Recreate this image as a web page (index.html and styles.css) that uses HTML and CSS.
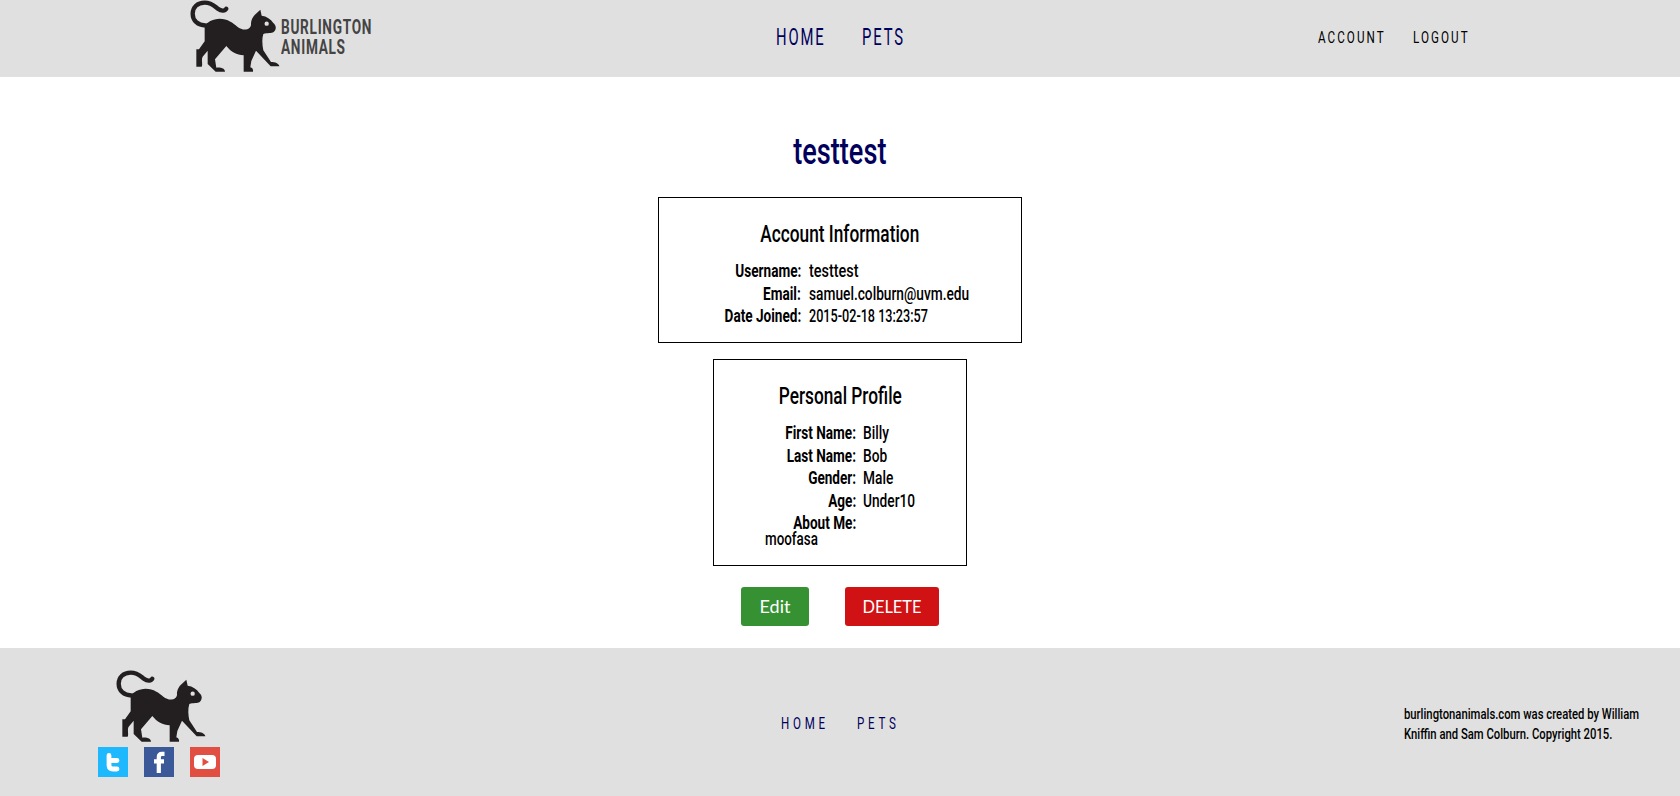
FILE: index.html
```html
<!DOCTYPE html>
<html lang="en">
<head>
<meta charset="utf-8">
<title>Burlington Animals</title>
<link rel="stylesheet" href="styles.css">
</head>
<body>
<svg width="0" height="0" class="defs" aria-hidden="true">
  <symbol id="cat" viewBox="28 0 270 216">
    <path d="M137 26C134 33 122 34 113 27C101 18 93 8 72 8C50 8 36 22 36 41C36 62 52 76 74 76" fill="none" stroke="#231f20" stroke-width="13" stroke-linecap="round"/>
    <path d="M60 80C75 76 86 57 116 56C142 56 157 69 170 80C186 93 209 91 211 74C210 62 216 51 222 45L239 29L243 47C258 49 270 57 278 69C287 76 288 88 279 96C272 101 260 98 248 102C243 118 245 136 248 151L271 186C283 186 295 190 296 199H270L226 152L212 183L209 202C216 204 218 209 217 215H189V166C168 164 151 156 137 138L103 178L107 203C124 202 133 207 133 215H105L81 192V152L66 170C61 178 67 193 63 200H47V148H55L72 124V82Z" fill="#231f20"/>
    <circle cx="258" cy="71" r="6.500" fill="#e0e0e0"/>
  </symbol>
</svg>
<header class="top">
  <a class="brand"><svg class="cat"><use href="#cat"/></svg><span class="brand-name"><b>BURLINGTON</b><b>ANIMALS</b></span></a>
  <nav class="main-nav"><a>HOME</a><a>PETS</a></nav>
  <nav class="user-nav"><a>ACCOUNT</a><a>LOGOUT</a></nav>
</header>
<main>
  <h1><span>testtest</span></h1>
  <section class="card account">
    <h2><span>Account Information</span></h2>
    <dl>
      <dt>Username:</dt><dd class="user">testtest</dd>
      <dt>Email:</dt><dd>samuel.colburn@uvm.edu</dd>
      <dt>Date Joined:</dt><dd class="date">2015-02-18 13:23:57</dd>
    </dl>
  </section>
  <section class="card profile">
    <h2><span>Personal Profile</span></h2>
    <dl>
      <dt>First Name:</dt><dd>Billy</dd>
      <dt>Last Name:</dt><dd>Bob</dd>
      <dt>Gender:</dt><dd>Male</dd>
      <dt>Age:</dt><dd>Under10</dd>
      <dt>About Me:</dt><dd></dd>
    </dl>
    <p class="about">moofasa</p>
  </section>
  <div class="actions"><a class="btn edit">Edit</a><a class="btn delete"><span>DELETE</span></a></div>
</main>
<footer>
  <div class="foot-brand">
    <svg class="cat"><use href="#cat"/></svg>
    <div class="social">
      <svg viewBox="0 0 30 30"><path fill="#1eb8ff" d="M0 0h30v30H0z"/><path d="M11 8.500v9.500q0 4 4 4H19M11 13.500h8" fill="none" stroke="#fff" stroke-width="4.800" stroke-linecap="round"/></svg>
      <svg viewBox="0 0 30 30"><path fill="#3b5998" d="M0 0h30v30H0z"/><path d="M20.500 6.800H18q-3.200 0-3.200 3.400V26M10 14.400h10" fill="none" stroke="#fff" stroke-width="4.200"/></svg>
      <svg viewBox="0 0 30 30"><path fill="#e14e42" d="M0 0h30v30H0z"/><rect x="4" y="8" width="22" height="14" rx="4" fill="#fff"/><path d="M12.500 11v8l6.500-4z" fill="#e14e42"/></svg>
    </div>
  </div>
  <nav class="foot-nav"><a>HOME</a><a>PETS</a></nav>
  <p class="copy"><span>burlingtonanimals.com was created by William</span><span>Kniffin and Sam Colburn. Copyright 2015.</span></p>
</footer>
</body>
</html>
```
FILE: styles.css
```css
* { box-sizing: border-box; margin: 0; padding: 0; }
body { height: 796px; display: flex; flex-direction: column; background: #fff; color: #000; font-family: Roboto, sans-serif; overflow: hidden; }
.defs { display: none; }
a, span, b, dt, dd, .about { white-space: nowrap; }
.cat { display: block; width: 90px; height: 72px; }
.top { height: 77px; background: #e0e0e0; display: grid; grid-template-columns: 776px 542px 1fr; }
.brand { display: flex; padding-left: 189.500px; }
.brand-name { width: 90px; padding: 18px 0 0 1.500px; color: #444; }
.brand-name b { display: block; font-size: 19.500px; line-height: 20px; letter-spacing: 1px; transform: scaleX(.7); transform-origin: left; }
nav { display: flex; font-weight: 400; }
nav a { transform-origin: left; }
.main-nav { padding-top: 23px; color: #00005c; font-size: 23.500px; line-height: 28px; letter-spacing: 3px; }
.main-nav a { width: 86px; transform: scaleX(.63); }
.user-nav { padding-top: 27px; font-size: 17px; line-height: 20px; letter-spacing: 3px; }
.user-nav a { width: 95px; transform: scaleX(.685); }
main { height: 571px; display: flex; flex-direction: column; align-items: center; }
h1 { height: 120px; padding-top: 54px; font-size: 36px; line-height: 42px; font-weight: 500; color: #00005c; }
h1 span { display: block; transform: scaleX(.755); }
.card { border: 1px solid #000; padding-top: 22px; }
.account { width: 364px; height: 146px; }
.profile { width: 254px; height: 207px; margin-top: 16px; }
h2 { display: flex; justify-content: center; height: 40px; font-size: 24.500px; line-height: 28px; font-weight: 500; }
h2 span { display: block; transform: scaleX(.705); }
dl { display: grid; grid-template-columns: 142px 1fr; column-gap: 8px; grid-auto-rows: 22.600px; font-size: 19px; line-height: 22px; }
.profile dl { grid-template-columns: 142px 1fr; column-gap: 7px; }
dt { justify-self: end; font-weight: 700; transform: scaleX(.715); transform-origin: right; }
dd, .about { font-weight: 500; transform: scaleX(.722); transform-origin: left; }
dd { justify-self: start; }
.user { transform: scaleX(.76); }
.date { transform: scaleX(.665); }
.about { font-size: 19px; line-height: 22px; margin: -7px 0 0 51px; transform: scaleX(.705); }
.actions { display: flex; gap: 36px; margin-top: 21px; }
.btn { height: 39px; border-radius: 3px; color: #fff; text-align: center; font: 18px/38px Lato, sans-serif; }
.edit { width: 68px; background: #369132; }
.delete { width: 94px; background: #d01214; }
.delete span { display: block; transform: scaleX(.91); }
footer { height: 148px; background: #e0e0e0; display: grid; grid-template-columns: 781px 623px 1fr; }
.foot-brand { padding: 22px 0 0 98px; }
.foot-brand .cat { margin-left: 17.500px; }
.social { display: flex; gap: 16px; margin-top: 5px; }
.social svg { width: 30px; height: 30px; }
.foot-nav { padding-top: 65px; color: #00005c; font-size: 17px; line-height: 20px; letter-spacing: 5.500px; }
.foot-nav a { width: 76px; transform: scaleX(.68); }
.copy { padding-top: 56px; font-size: 15.500px; line-height: 20px; font-weight: 500; }
.copy span { display: block; width: max-content; transform: scaleX(.728); transform-origin: left; }
```
